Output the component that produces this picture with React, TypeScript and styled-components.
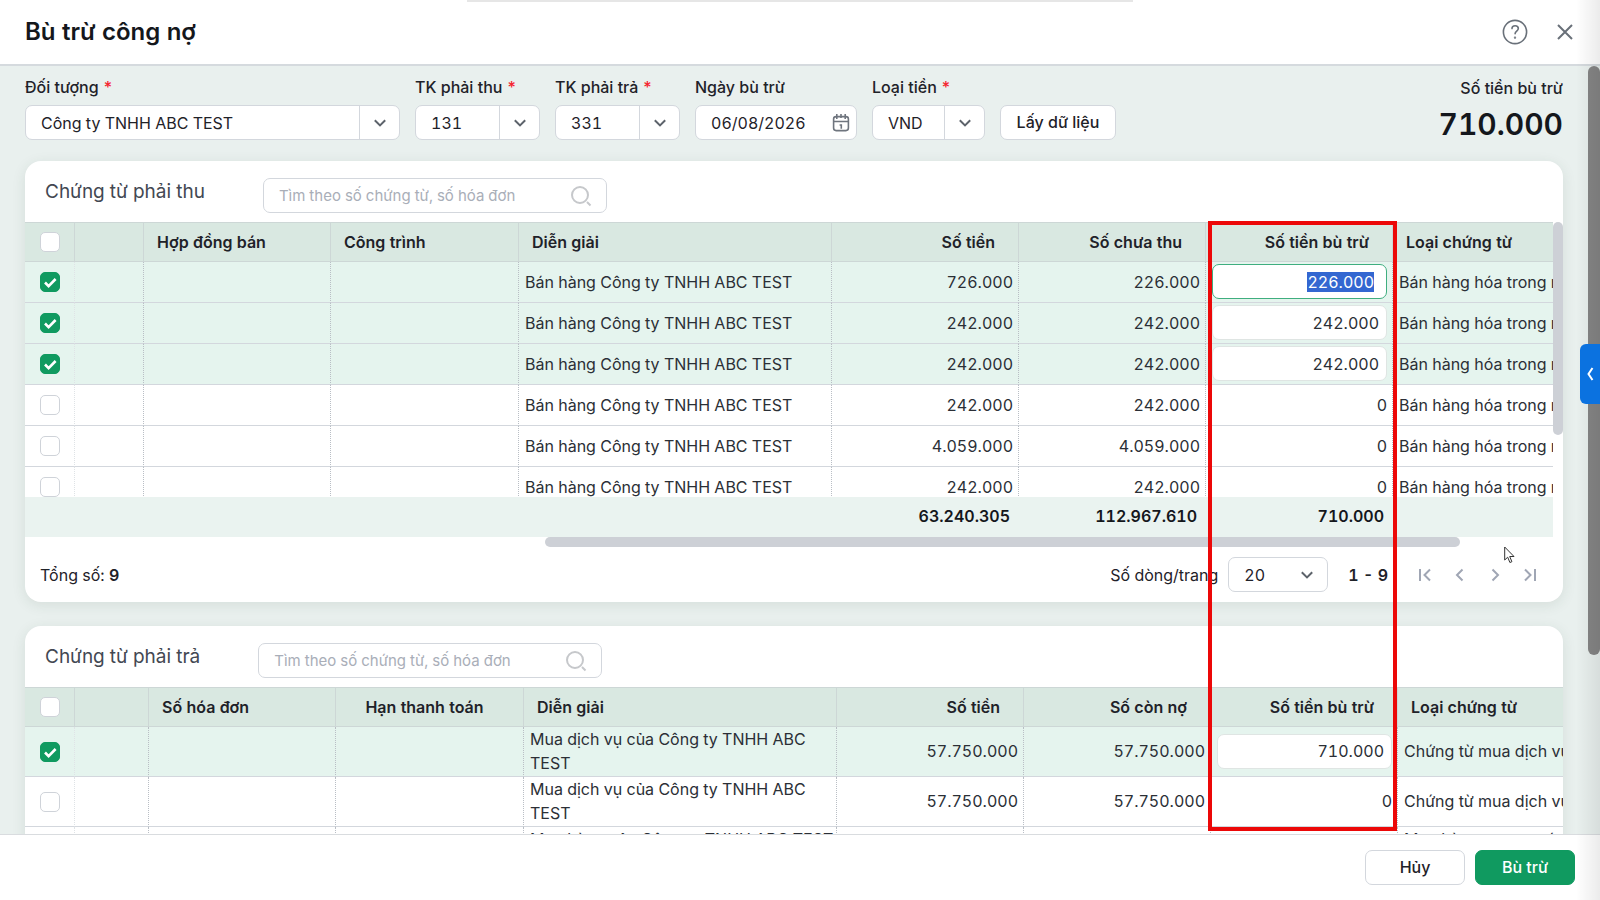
import React, { useEffect, useId, useRef } from "react";
import styled, { createGlobalStyle, css } from "styled-components";

const GlobalStyle = createGlobalStyle`
  *, *::before, *::after { box-sizing: border-box; }
  body { margin: 0; background: #fff; }
  body, button, input, select {
    font-family: Inter, Roboto, sans-serif;
    font-size: 16px;
    color: #1f2229;
    font-variant-numeric: tabular-nums;
  }
  button { cursor: pointer; }
`;

const line = "#d3d7dd";

const Dialog = styled.div`
  position: relative;
  display: flex;
  flex-direction: column;
  height: 100vh;
  overflow: hidden;
`;

const EdgeShade = styled.div`
  position: absolute;
  inset: 0 0 0 auto;
  width: 24px;
  background: linear-gradient(to right, rgba(0, 0, 0, 0), rgba(0, 0, 0, 0.08));
  pointer-events: none;
`;

const TopHandle = styled.div`
  position: absolute;
  top: 0;
  left: 50%;
  width: 666px;
  height: 2px;
  transform: translateX(-50%);
  background: #e6e6e6;
`;

const TitleBar = styled.header`
  display: flex;
  align-items: center;
  justify-content: space-between;
  height: 66px;
  flex: none;
  padding: 0 23px 0 25px;
  border-bottom: 2px solid #d5dade;
`;

const Title = styled.h1`
  margin: 0;
  font-size: 24px;
  line-height: 32px;
  font-weight: 600;
  color: #14171c;
`;

const TitleActions = styled.div`
  display: flex;
  gap: 26px;
`;

const IconButton = styled.button`
  display: grid;
  place-items: center;
  width: 24px;
  height: 24px;
  padding: 0;
  border: 0;
  background: none;
  color: #697079;
  svg { margin: -1px; }
`;

const Body = styled.main`
  position: relative;
  flex: 1;
  min-height: 0;
  overflow: hidden;
  display: flex;
  flex-direction: column;
  gap: 24px;
  padding: 11px 37px 0 25px;
  background: #e9f0ee;
`;

const PageThumb = styled.div`
  position: absolute;
  top: 0;
  right: 0;
  width: 12px;
  height: 589px;
  border-radius: 6px;
  background: #858585;
`;

const Filters = styled.form`
  display: flex;
  align-items: flex-start;
  gap: 15px;
  height: 60px;
  flex: none;
`;

const Field = styled.div<{ $w: number }>`
  width: ${(p) => p.$w}px;
`;

const Label = styled.label`
  display: block;
  height: 28px;
  line-height: 20px;
  font-weight: 500;
  white-space: nowrap;
`;

const Required = styled.span`
  margin-left: 4px;
  color: #f5222d;
`;

const Box = styled.div`
  position: relative;
  display: flex;
  align-items: center;
  height: 35px;
  border: 1px solid ${line};
  border-radius: 7px;
  background: #fff;
  overflow: hidden;
`;

const Select = styled.select`
  appearance: none;
  flex: 1;
  width: 100%;
  height: 100%;
  padding: 0 15px;
  border: 0;
  background: none;
  outline: none;
`;

const Arrow = styled.span<{ $divided?: boolean }>`
  position: absolute;
  inset: 0 0 0 auto;
  width: 40px;
  display: grid;
  place-items: center;
  border-left: ${(p) => (p.$divided ? `1px solid ${line}` : "0")};
  color: #5d636b;
  pointer-events: none;
`;

const TextInput = styled.input`
  flex: 1;
  min-width: 0;
  height: 100%;
  padding: 0 0 0 15px;
  border: 0;
  background: none;
  outline: none;
  &::placeholder { color: #a9aeb8; opacity: 1; }
`;

const BoxIcon = styled.span`
  display: grid;
  margin-right: 6px;
`;

const Button = styled.button<{ $primary?: boolean; $w: number }>`
  width: ${(p) => p.$w}px;
  height: 35px;
  padding: 0 0 2px;
  border: 1px solid ${(p) => (p.$primary ? "#109a60" : line)};
  border-radius: 7px;
  background: ${(p) => (p.$primary ? "#109a60" : "#fff")};
  color: ${(p) => (p.$primary ? "#fff" : "#1f2229")};
  font-weight: 500;
`;

const FetchSlot = styled.div`
  padding-top: 28px;
`;

const Total = styled.div`
  margin-left: auto;
  text-align: right;
  font-weight: 500;
  line-height: 22px;
`;

const TotalValue = styled.div`
  font-size: 30px;
  line-height: 50px;
  font-weight: 600;
  color: #14171c;
`;

const Card = styled.section`
  flex: none;
  border-radius: 16px;
  background: #fff;
  box-shadow: 0 3px 14px rgba(40, 70, 50, 0.1);
  overflow: clip;
`;

const CardHead = styled.div`
  display: flex;
  align-items: flex-start;
  gap: 58px;
  height: 61px;
  padding: 17px 20px 0;
`;

const CardTitle = styled.h2`
  margin: 0;
  font-size: 19px;
  line-height: 28px;
  font-weight: 400;
  color: #434852;
`;

const SearchBox = styled(Box)`
  width: 344px;
  ${TextInput} { font-size: 15px; }
  ${BoxIcon} { margin-right: 14px; }
`;

const GridFrame = styled.div<{ $scroll?: boolean }>`
  position: relative;
  ${(p) =>
    p.$scroll &&
    css`
      padding: 0 10px 10px 0;
    `}
`;

const GridView = styled.div<{ $h?: number }>`
  height: ${(p) => (p.$h ? `${p.$h}px` : "auto")};
  overflow: hidden;
`;

const BarY = styled.div`
  position: absolute;
  top: 0;
  right: 0;
  width: 10px;
  height: 213px;
  border-radius: 5px;
  background: #cdd0d6;
`;

const BarX = styled.div`
  position: absolute;
  bottom: 0;
  left: 520px;
  right: 103px;
  height: 10px;
  border-radius: 5px;
  background: #cdd0d6;
`;

const Table = styled.table`
  width: 100%;
  table-layout: fixed;
  border-collapse: separate;
  border-spacing: 0;
`;

type Align = "left" | "center" | "right";

const Th = styled.th<{ $align?: Align }>`
  height: 40px;
  padding: 0 23px 1px 13px;
  border: solid #cdd7d6;
  border-width: 1px 1px 1px 0;
  background: #d9e8e1;
  font-weight: 600;
  text-align: ${(p) => p.$align ?? "left"};
  white-space: nowrap;
  &:first-child { padding: 0; }
  &:last-child { border-right: 0; padding-right: 0; }
`;

const Tr = styled.tr<{ $on?: boolean }>`
  background: ${(p) => (p.$on ? "#e5f4ee" : "#fff")};
`;

const Td = styled.td<{ $align?: Align; $h: number; $wrap?: boolean }>`
  height: ${(p) => p.$h}px;
  padding: 0 ${(p) => (p.$wrap ? 2 : 5)}px 1px 6px;
  border-bottom: 1px solid ${line};
  border-right: 1px dotted #b9bec5;
  color: #2b2f36;
  line-height: 24px;
  text-align: ${(p) => p.$align ?? "left"};
  white-space: ${(p) => (p.$wrap ? "pre-line" : "pre")};
  overflow: hidden;
  &:first-child { padding: 0; border-right-color: #dfe3e6; }
  &:last-child { border-right: 0; padding-right: 0; }
`;

const SumTd = styled.td`
  position: sticky;
  bottom: 0;
  height: 40px;
  padding: 0 9px 2px;
  background: #eaf3f0;
  color: #14171c;
  font-weight: 600;
  text-align: right;
`;

const Check = styled.label`
  display: grid;
  width: 20px;
  margin-left: 15px;
  > * { grid-area: 1 / 1; }
  svg { pointer-events: none; }
`;

const CheckInput = styled.input`
  appearance: none;
  width: 20px;
  height: 20px;
  margin: 0;
  border: 1px solid #cfd3d9;
  border-radius: 5px;
  background: #fff;
  &:checked { border-color: #109a60; background: #109a60; }
`;

const AmountInput = styled.input`
  display: block;
  width: 100%;
  height: 35px;
  padding: 0 7px;
  border: 1px solid #dfe5e3;
  border-radius: 7px;
  background: #fff;
  color: #2b2f36;
  text-align: right;
  outline: none;
  &:focus { border-color: #3fae7f; padding-right: 12px; }
  &::selection { background: #3367d1; color: #fff; }
`;

const Pager = styled.div`
  display: flex;
  align-items: center;
  height: 55px;
  padding: 0 21px 0 15px;
`;

const PagerRight = styled.div`
  display: flex;
  align-items: center;
  margin-left: auto;
`;

const PageSize = styled(Box)`
  width: 100px;
  margin: 0 20px 0 10px;
`;

const PageNav = styled.nav`
  display: flex;
  gap: 11px;
  margin-left: 25px;
  ${IconButton} { color: #a0a6b4; }
`;

const Strong = styled.strong`
  font-weight: 600;
`;

const Footer = styled.footer`
  display: flex;
  justify-content: flex-end;
  gap: 10px;
  flex: none;
  height: 66px;
  padding: 15px 25px 0;
  border-top: 1px solid #d9dcdf;
  background: #fff;
`;

const SideTab = styled.button`
  position: absolute;
  top: 344px;
  right: 0;
  display: grid;
  place-items: center;
  width: 20px;
  height: 60px;
  padding: 0;
  border: 0;
  border-radius: 6px 0 0 6px;
  background: #0b72e0;
  color: #fff;
`;

const Highlight = styled.div`
  position: absolute;
  top: 221px;
  left: 1208px;
  width: 189px;
  height: 610px;
  border: 4px solid #ec0808;
  pointer-events: none;
`;

const Pointer = styled.svg`
  position: absolute;
  top: 546px;
  right: 85px;
  pointer-events: none;
`;

const Stroke = ({ d, w, h, sw = 2 }: { d: string; w: number; h: number; sw?: number }) => (
  <svg width={w} height={h} viewBox={`0 0 ${w} ${h}`} fill="none" stroke="currentColor" strokeWidth={sw} aria-hidden="true">
    <path d={d} />
  </svg>
);

const Chevron = () => <Stroke w={12} h={8} d="M.8 1.2 6 6.4l5.200-5.200" />;

const CalendarIcon = () => (
  <svg width="18" height="20" viewBox="0 0 18 20" fill="none" stroke="#6f757e" strokeWidth="1.6" aria-hidden="true">
    <rect x="1.6" y="3.6" width="14.8" height="14" rx="2.5" />
    <path d="M2 8.5h14M4.8 1v5M9 1v4M13.2 1v5" />
    <path d="M7.6 12h1.7v3.8" />
  </svg>
);

const SearchIcon = () => (
  <svg width="22" height="22" viewBox="0 0 22 22" fill="none" stroke="#c6c8cb" strokeWidth="2" aria-hidden="true">
    <circle cx="10" cy="10" r="8" />
    <path d="m17 17 3.5 3.5" />
  </svg>
);

const HelpIcon = () => (
  <svg width="26" height="26" viewBox="0 0 26 26" fill="none" stroke="currentColor" strokeWidth="1.6" strokeLinecap="round" aria-hidden="true">
    <circle cx="13" cy="13" r="11.6" />
    <path d="M10 9.6c0-1.9 1.4-2.9 3.1-2.9s3.2 1.1 3.2 2.8c0 2.5-3.2 2.6-3.2 5.2" />
    <circle cx="13" cy="18.6" r=".4" fill="currentColor" />
  </svg>
);

function Combo({ label, value, w, required }: { label: string; value: string; w: number; required?: boolean }) {
  const id = useId();
  return (
    <Field $w={w}>
      <Label htmlFor={id}>
        {label}
        {required && <Required>*</Required>}
      </Label>
      <Box>
        <Select id={id}>
          <option>{value}</option>
        </Select>
        <Arrow $divided>
          <Chevron />
        </Arrow>
      </Box>
    </Field>
  );
}

function DateField({ label, value, w }: { label: string; value: string; w: number }) {
  const id = useId();
  return (
    <Field $w={w}>
      <Label htmlFor={id}>{label}</Label>
      <Box>
        <TextInput id={id} defaultValue={value} />
        <BoxIcon>
          <CalendarIcon />
        </BoxIcon>
      </Box>
    </Field>
  );
}

function Tick({ on, name }: { on?: boolean; name: string }) {
  return (
    <Check>
      <CheckInput type="checkbox" defaultChecked={on} aria-label={name} />
      {on && (
        <svg width="20" height="20" viewBox="0 0 20 20" fill="none" stroke="#fff" strokeWidth="2.6" aria-hidden="true">
          <path d="m5 10.5 3.6 3.7 7-7.2" />
        </svg>
      )}
    </Check>
  );
}

function Amount({ value, active }: { value: string; active?: boolean }) {
  const ref = useRef<HTMLInputElement>(null);
  useEffect(() => {
    if (active) {
      ref.current?.focus({ preventScroll: true });
      ref.current?.select();
    }
  }, [active]);
  return <AmountInput ref={ref} defaultValue={value} aria-label="Số tiền bù trừ" />;
}

type Row = { text: string; amount: string; open: string; offset: string; kind: string; on?: boolean; active?: boolean };
type Column = { title: string; width?: number; align?: Align };

const receivableColumns: Column[] = [
  { title: "", width: 69 },
  { title: "Hợp đồng bán", width: 187 },
  { title: "Công trình", width: 188 },
  { title: "Diễn giải", width: 313 },
  { title: "Số tiền", width: 187, align: "right" },
  { title: "Số chưa thu", width: 187, align: "right" },
  { title: "Số tiền bù trừ", width: 187, align: "right" },
  { title: "Loại chứng từ" },
];

const payableColumns: Column[] = [
  { title: "", width: 74 },
  { title: "Số hóa đơn", width: 187 },
  { title: "Hạn thanh toán", width: 188, align: "center" },
  { title: "Diễn giải", width: 313 },
  { title: "Số tiền", width: 187, align: "right" },
  { title: "Số còn nợ", width: 187, align: "right" },
  { title: "Số tiền bù trừ", width: 187, align: "right" },
  { title: "Loại chứng từ" },
];

const sale = { text: "Bán hàng Công ty TNHH ABC TEST", kind: "Bán hàng hóa trong nước" };
const receivables: Row[] = [
  { ...sale, amount: "726.000", open: "226.000", offset: "226.000", on: true, active: true },
  { ...sale, amount: "242.000", open: "242.000", offset: "242.000", on: true },
  { ...sale, amount: "242.000", open: "242.000", offset: "242.000", on: true },
  { ...sale, amount: "242.000", open: "242.000", offset: "0" },
  { ...sale, amount: "4.059.000", open: "4.059.000", offset: "0" },
  { ...sale, amount: "242.000", open: "242.000", offset: "0" },
];

const service = { text: "Mua dịch vụ của Công ty TNHH ABC TEST", kind: "Chứng từ mua dịch vụ", amount: "57.750.000", open: "57.750.000" };
const payables: Row[] = [
  { ...service, offset: "710.000", on: true },
  { ...service, offset: "0" },
  { ...service, text: "Mua hàng của Công ty TNHH ABC TEST\ntheo hóa đơn", kind: "Mua hàng trong nước\nnhập kho", offset: "0" },
];

function Grid({ columns, rows, rowHeight, sums }: { columns: Column[]; rows: Row[]; rowHeight: number; sums?: string[] }) {
  return (
    <Table>
      <colgroup>
        <col width={50} />
        {columns.map((c, i) => (
          <col key={i} width={c.width} />
        ))}
      </colgroup>
      <thead>
        <tr>
          <Th>
            <Tick name="Chọn tất cả" />
          </Th>
          {columns.map((c, i) => (
            <Th key={i} $align={c.align}>
              {c.title}
            </Th>
          ))}
        </tr>
      </thead>
      <tbody>
        {rows.map((r, i) => (
          <Tr key={i} $on={r.on}>
            <Td $h={rowHeight}>
              <Tick on={r.on} name={`Chọn dòng ${i + 1}`} />
            </Td>
            <Td $h={rowHeight} />
            <Td $h={rowHeight} />
            <Td $h={rowHeight} />
            <Td $h={rowHeight} $wrap>
              {r.text}
            </Td>
            <Td $h={rowHeight} $align="right">{r.amount}</Td>
            <Td $h={rowHeight} $align="right">{r.open}</Td>
            <Td $h={rowHeight} $align="right">
              {r.on ? <Amount value={r.offset} active={r.active} /> : r.offset}
            </Td>
            <Td $h={rowHeight}>{r.kind}</Td>
          </Tr>
        ))}
      </tbody>
      {sums && (
        <tfoot>
          <tr>
            <SumTd colSpan={5} />
            {sums.map((s) => (
              <SumTd key={s}>{s}</SumTd>
            ))}
            <SumTd />
          </tr>
        </tfoot>
      )}
    </Table>
  );
}

function CardHeader({ title }: { title: string }) {
  return (
    <CardHead>
      <CardTitle>{title}</CardTitle>
      <SearchBox>
        <TextInput placeholder="Tìm theo số chứng từ, số hóa đơn" aria-label={`Tìm trong ${title}`} />
        <BoxIcon>
          <SearchIcon />
        </BoxIcon>
      </SearchBox>
    </CardHead>
  );
}

export default function App() {
  return (
    <>
      <GlobalStyle />
      <Dialog>
        <TitleBar>
          <Title>Bù trừ công nợ</Title>
          <TitleActions>
            <IconButton aria-label="Trợ giúp">
              <HelpIcon />
            </IconButton>
            <IconButton aria-label="Đóng">
              <Stroke w={16} h={16} d="M1 1l14 14M15 1 1 15" />
            </IconButton>
          </TitleActions>
        </TitleBar>
        <Body>
          <Filters>
            <Combo label="Đối tượng" value="Công ty TNHH ABC TEST" w={375} required />
            <Combo label="TK phải thu" value="131" w={125} required />
            <Combo label="TK phải trả" value="331" w={125} required />
            <DateField label="Ngày bù trừ" value="06/08/2026" w={162} />
            <Combo label="Loại tiền" value="VND" w={113} required />
            <FetchSlot>
              <Button type="button" $w={116}>Lấy dữ liệu</Button>
            </FetchSlot>
            <Total>
              Số tiền bù trừ
              <TotalValue>710.000</TotalValue>
            </Total>
          </Filters>
          <Card>
            <CardHeader title="Chứng từ phải thu" />
            <GridFrame $scroll>
              <GridView $h={315}>
                <Grid columns={receivableColumns} rows={receivables} rowHeight={41} sums={["63.240.305", "112.967.610", "710.000"]} />
              </GridView>
              <BarY />
              <BarX />
            </GridFrame>
            <Pager>
              <span>
                Tổng số: <Strong>9</Strong>
              </span>
              <PagerRight>
                <label htmlFor="page-size">Số dòng/trang</label>
                <PageSize>
                  <Select id="page-size">
                    <option>20</option>
                  </Select>
                  <Arrow>
                    <Chevron />
                  </Arrow>
                </PageSize>
                <Strong>1 - 9</Strong>
                <PageNav aria-label="Phân trang">
                  <IconButton aria-label="Trang đầu"><Stroke w={14} h={14} d="M2 1v12M12 1.5 6.5 7l5.5 5.5" /></IconButton>
                  <IconButton aria-label="Trang trước"><Stroke w={14} h={14} d="M9.5 1.5 4 7l5.5 5.5" /></IconButton>
                  <IconButton aria-label="Trang sau"><Stroke w={14} h={14} d="M4.5 1.5 10 7l-5.5 5.5" /></IconButton>
                  <IconButton aria-label="Trang cuối"><Stroke w={14} h={14} d="M12 1v12M2 1.5 7.5 7 2 12.5" /></IconButton>
                </PageNav>
              </PagerRight>
            </Pager>
          </Card>
          <Card>
            <CardHeader title="Chứng từ phải trả" />
            <GridFrame>
              <GridView>
                <Grid columns={payableColumns} rows={payables} rowHeight={50} />
              </GridView>
            </GridFrame>
          </Card>
          <PageThumb />
        </Body>
        <Footer>
          <Button $w={100}>Hủy</Button>
          <Button $w={100} $primary>Bù trừ</Button>
        </Footer>
        <TopHandle />
        <EdgeShade />
        <SideTab aria-label="Mở bảng bên">
          <Stroke w={8} h={14} d="M6.5 1 2.5 7l4 6" />
        </SideTab>
        <Highlight />
        <Pointer width="11" height="18" viewBox="0 0 11 18" fill="#fff" stroke="#333" strokeWidth="1">
          <path d="M.7 1v13l3-2.8 2.2 5.3 2-.8-2.2-5.200h4.300z" />
        </Pointer>
      </Dialog>
    </>
  );
}
